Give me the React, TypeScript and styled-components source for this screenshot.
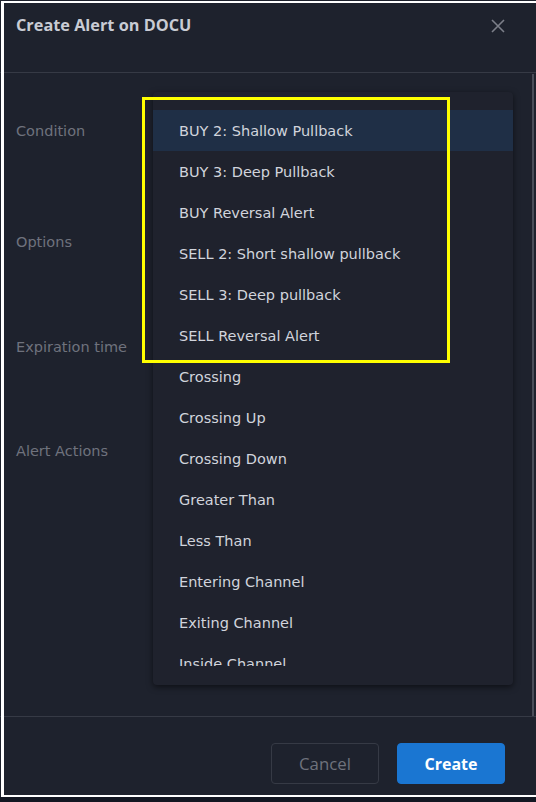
import styled, { createGlobalStyle } from 'styled-components'

const GlobalStyle = createGlobalStyle`
  html, body {
    margin: 0;
    padding: 0;
    background: #131722;
  }
  body {
    font-family: "DejaVu Sans", "Open Sans", sans-serif;
  }
`

const Page = styled.div`
  position: relative;
  width: 536px;
  height: 802px;
  overflow: hidden;
  background: #131722;
`

const Dialog = styled.div`
  position: relative;
  width: 536px;
  height: 797px;
  background: #1e222d;
  display: flex;
  flex-direction: column;
`

const Frame = styled.div`
  position: absolute;
  left: 1px;
  top: 1px;
  width: 540px;
  height: 796px;
  box-sizing: border-box;
  border: 2px solid #ffffff;
  border-left-width: 3px;
  pointer-events: none;
`

const Header = styled.div`
  height: 73px;
  box-sizing: border-box;
  padding: 13px 28px 0 16px;
  display: flex;
  align-items: flex-start;
  justify-content: space-between;
  border-bottom: 1px solid #363a45;
`

const Title = styled.div`
  font-family: "Open Sans", "Noto Sans", sans-serif;
  font-size: 16.3px;
  font-weight: 700;
  line-height: 24px;
  color: #c9ccd4;
`

const CloseButton = styled.button`
  width: 20px;
  height: 20px;
  margin-top: 3px;
  padding: 0;
  border: 0;
  background: transparent;
  display: flex;
  align-items: center;
  justify-content: center;
  color: #7c7f89;
`

const Body = styled.div`
  flex: 1;
  display: flex;
  border-bottom: 1px solid #363a45;
`

const Form = styled.div`
  flex: 1;
  display: flex;
  flex-direction: column;
  padding-top: 47px;
`

const Row = styled.div<{ $h: number }>`
  height: ${(p) => p.$h}px;
  display: flex;
  padding-left: 16px;
`

const Label = styled.div`
  font-size: 14.5px;
  line-height: 22px;
  color: #6f727d;
`

const Scrollbar = styled.div`
  width: 2px;
  margin: 1px 2px 0 0;
  background: #4a4e59;
`

const Footer = styled.div`
  height: 80px;
  box-sizing: border-box;
  padding: 26px 31px 0 0;
  display: flex;
  justify-content: flex-end;
  gap: 18px;
`

const Button = styled.button<{ $primary?: boolean }>`
  width: 108px;
  height: 41px;
  box-sizing: border-box;
  border-radius: 4px;
  font-family: "Open Sans", "Noto Sans", sans-serif;
  font-size: ${(p) => (p.$primary ? 16 : 16.8)}px;
  font-weight: ${(p) => (p.$primary ? 700 : 400)};
  color: ${(p) => (p.$primary ? '#ffffff' : '#6f727d')};
  background: ${(p) => (p.$primary ? '#1a76d2' : 'transparent')};
  border: 1px solid ${(p) => (p.$primary ? '#1a76d2' : '#363a45')};
`

const Menu = styled.div`
  position: absolute;
  left: 153px;
  top: 92px;
  width: 360px;
  height: 593px;
  box-sizing: border-box;
  padding: 18px 0 19px;
  background: #1f222d;
  border-radius: 4px;
  box-shadow: 0 2px 6px rgba(0, 0, 0, 0.55);
`

const MenuList = styled.div`
  height: 100%;
  overflow: hidden;
`

const MenuItem = styled.div<{ $active?: boolean }>`
  height: 41px;
  display: flex;
  align-items: center;
  padding-left: 26px;
  font-size: 14.5px;
  color: #d1d4dc;
  background: ${(p) => (p.$active ? '#1f2f46' : 'transparent')};
`

const Highlight = styled.div`
  position: absolute;
  left: 142px;
  top: 97px;
  width: 308px;
  height: 266px;
  box-sizing: border-box;
  border: 3px solid #ffff00;
  pointer-events: none;
`

const options = [
  'BUY 2: Shallow Pullback',
  'BUY 3: Deep Pullback',
  'BUY Reversal Alert',
  'SELL 2: Short shallow pullback',
  'SELL 3: Deep pullback',
  'SELL Reversal Alert',
  'Crossing',
  'Crossing Up',
  'Crossing Down',
  'Greater Than',
  'Less Than',
  'Entering Channel',
  'Exiting Channel',
  'Inside Channel',
]

const rows = [
  { label: 'Condition', h: 111 },
  { label: 'Options', h: 105 },
  { label: 'Expiration time', h: 104 },
  { label: 'Alert Actions', h: 100 },
]

export default function App() {
  return (
    <Page>
      <GlobalStyle />
      <Dialog>
        <Header>
          <Title>Create Alert on DOCU</Title>
          <CloseButton aria-label="Close">
            <svg width="16" height="16" viewBox="0 0 16 16">
              <path d="M2 2 L14 14 M14 2 L2 14" stroke="currentColor" strokeWidth="1.6" fill="none" />
            </svg>
          </CloseButton>
        </Header>
        <Body>
          <Form>
            {rows.map((r) => (
              <Row key={r.label} $h={r.h}>
                <Label>{r.label}</Label>
              </Row>
            ))}
          </Form>
          <Scrollbar />
        </Body>
        <Footer>
          <Button>Cancel</Button>
          <Button $primary>Create</Button>
        </Footer>
      </Dialog>
      <Menu>
        <MenuList>
          {options.map((o, i) => (
            <MenuItem key={o} $active={i === 0}>
              {o}
            </MenuItem>
          ))}
        </MenuList>
      </Menu>
      <Highlight />
      <Frame />
    </Page>
  )
}
